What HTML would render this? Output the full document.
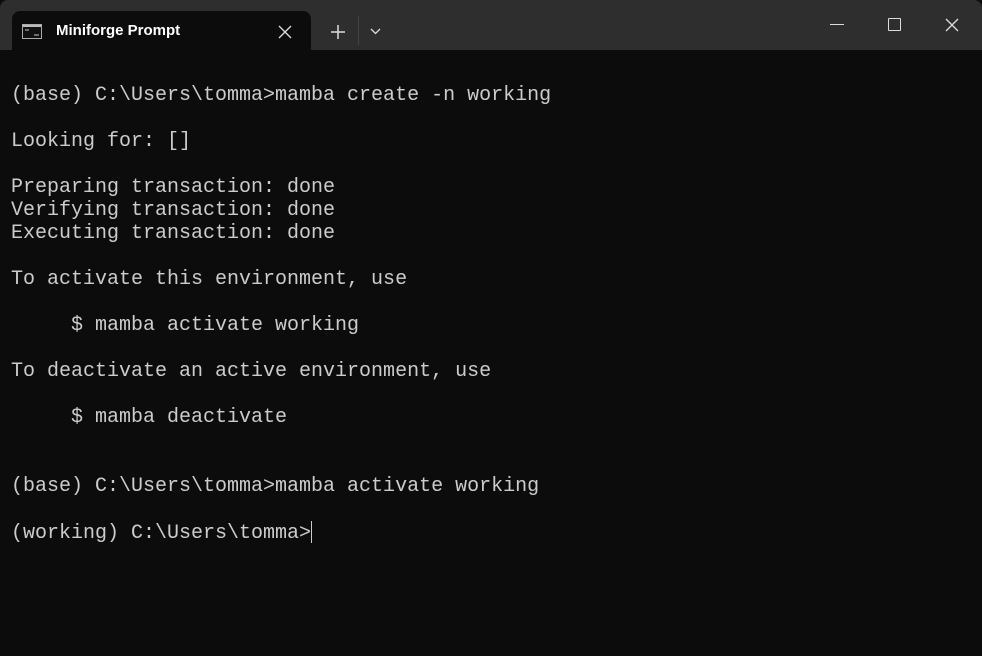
<!DOCTYPE html>
<html><head><style>
html,body{margin:0;padding:0;background:#0c0c0c;}
body{width:982px;height:656px;position:relative;overflow:hidden;}
.title{position:absolute;left:0;top:0;width:982px;height:50px;background:#2e2e2e;border-radius:8px 8px 0 0;}
.tab{position:absolute;left:12px;top:11px;width:299px;height:39px;background:#0c0c0c;border-radius:8px 8px 0 0;}
.tabt{position:absolute;left:56px;top:22px;font:15px "Liberation Sans",sans-serif;font-weight:bold;color:#fff;letter-spacing:0px;}
.term{position:absolute;left:11px;top:84px;font:20px/23px "Liberation Mono",monospace;color:#cccccc;white-space:pre;margin:0;}
.cur{display:inline-block;width:1px;height:22px;background:#ccc;vertical-align:-5px;}
</style></head><body>
<div class="title">
<div class="tab"></div>
<svg style="position:absolute;left:22px;top:24px" width="20" height="15"><rect x="0.5" y="0.5" width="19" height="14" fill="#111" stroke="#aaa"/><rect x="1" y="1" width="18" height="2" fill="#bbb"/><path d="M3 6h4M12 11h5" stroke="#ccc" stroke-width="1"/></svg>
<div class="tabt">Miniforge Prompt</div>
<svg style="position:absolute;left:278px;top:25px" width="14" height="14"><path d="M1 1L13 13M13 1L1 13" stroke="#ddd" stroke-width="1.3"/></svg>
<svg style="position:absolute;left:331px;top:25px" width="14" height="14"><path d="M7 0V14M0 7H14" stroke="#ddd" stroke-width="1.5"/></svg>
<div style="position:absolute;left:358px;top:16px;width:1px;height:29px;background:#444"></div>
<svg style="position:absolute;left:370px;top:28px" width="11" height="7"><path d="M1 1L5.5 5.5L10 1" stroke="#ddd" stroke-width="1.3" fill="none"/></svg>
<div style="position:absolute;left:830px;top:24px;width:14px;height:1px;background:#ddd"></div>
<div style="position:absolute;left:888px;top:18px;width:11px;height:11px;border:1px solid #ddd;border-radius:1px"></div>
<svg style="position:absolute;left:945px;top:18px" width="14" height="14"><path d="M1 1L13 13M13 1L1 13" stroke="#ddd" stroke-width="1.3"/></svg>
</div>
<pre class="term">(base) C:\Users\tomma>mamba create -n working

Looking for: []

Preparing transaction: done
Verifying transaction: done
Executing transaction: done

To activate this environment, use

     $ mamba activate working

To deactivate an active environment, use

     $ mamba deactivate


(base) C:\Users\tomma>mamba activate working

(working) C:\Users\tomma><span class="cur"></span></pre>
</body></html>
